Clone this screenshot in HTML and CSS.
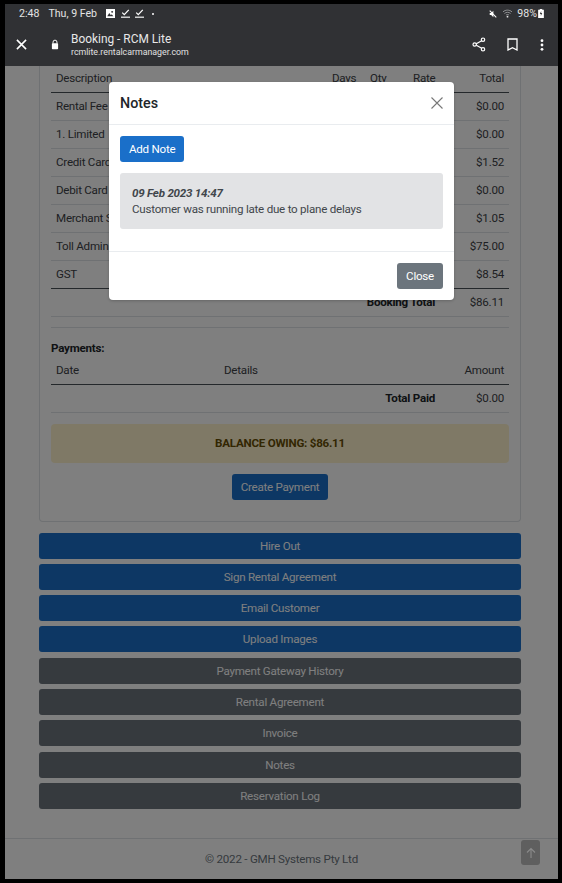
FILE: index.html
```html
<!DOCTYPE html>
<html lang="en">
<head>
  <meta charset="UTF-8">
  <title>Booking - RCM Lite</title>
  <link rel="stylesheet" href="styles.css">
</head>
<body>
  <div class="device">
    <header class="chrome">
      <div class="status-bar">
        <span class="clock">2:48</span>
        <span class="date">Thu, 9 Feb</span>
        <svg class="status-icon" width="9" height="9" viewBox="0 0 11 11"><path d="M0 0h11v11H0z" fill="#fff"/><path d="M1.500 9l2.500-4 2 2.500 1-1 2 2.500z" fill="#303134"/><circle cx="7.500" cy="3.500" r="1.200" fill="#303134"/></svg>
        <svg class="status-icon" width="9" height="9" viewBox="0 0 11 11"><path d="M1.500 4.500l2.500 2.500L9.500 1" fill="none" stroke="#fff" stroke-width="1.500"/><path d="M0 10h11" stroke="#fff" stroke-width="1.400"/></svg>
        <svg class="status-icon" width="9" height="9" viewBox="0 0 11 11"><path d="M1.500 4.500l2.500 2.500L9.500 1" fill="none" stroke="#fff" stroke-width="1.500"/><path d="M0 10h11" stroke="#fff" stroke-width="1.400"/></svg>
        <span class="status-dot"></span>
        <span class="status-right">
          <svg width="8" height="8" viewBox="0 0 11 11"><path d="M1 4h2l3-3v9L3 7H1z" fill="#fff"/><path d="M1 1l9 9" stroke="#fff" stroke-width="1.500"/></svg>
          <svg class="wifi" width="11" height="9" viewBox="0 0 12 10"><path d="M1 3.200c2.800-2.600 7.200-2.600 10 0M2.600 5c2-1.800 4.800-1.800 6.800 0M4.300 6.800c1-.9 2.400-.9 3.400 0" fill="none" stroke="#a5a6a8" stroke-width=".9"/><circle cx="6" cy="8.500" r="1" fill="#e4e4e4"/></svg>
          <span class="battery-text">98%</span>
          <svg class="battery" width="6" height="9" viewBox="0 0 7 11"><path d="M2 0h3v1h2v10H0V1h2z" fill="#fff"/><path d="M3.800 2.500L2 6h1.300v2.500L5 5H3.700z" fill="#303134"/></svg>
        </span>
      </div>
      <div class="toolbar">
        <svg class="tool-close" width="11" height="11" viewBox="0 0 12 12"><path d="M1 1l10 10M11 1L1 11" stroke="#fff" stroke-width="1.700"/></svg>
        <svg class="tool-lock" width="8" height="11" viewBox="0 0 9 12"><path d="M2.300 5V3.300a2.200 2.200 0 0 1 4.400 0V5" fill="none" stroke="#fff" stroke-width="1.100"/><rect x="1" y="4.600" width="7" height="6.800" rx=".8" fill="#fff"/></svg>
        <div class="tool-title">
          <div class="page-title">Booking - RCM Lite</div>
          <div class="page-url">rcmlite.rentalcarmanager.com</div>
        </div>
        <div class="tool-actions">
          <svg width="14" height="15" viewBox="0 0 14 15"><path d="M11 3L3 7.500 11 12" fill="none" stroke="#fff" stroke-width="1.200"/><circle cx="11" cy="2.700" r="1.700" fill="#303134" stroke="#fff" stroke-width="1.200"/><circle cx="2.700" cy="7.500" r="1.700" fill="#303134" stroke="#fff" stroke-width="1.200"/><circle cx="11" cy="12.300" r="1.700" fill="#303134" stroke="#fff" stroke-width="1.200"/></svg>
          <svg width="11" height="13" viewBox="0 0 11 13"><path d="M1 1h9v11L5.500 9.700 1 12z" fill="none" stroke="#fff" stroke-width="1.300"/></svg>
          <svg class="tool-more" width="4" height="12" viewBox="0 0 4 12"><circle cx="2" cy="1.700" r="1.400" fill="#fff"/><circle cx="2" cy="6" r="1.400" fill="#fff"/><circle cx="2" cy="10.300" r="1.400" fill="#fff"/></svg>
        </div>
      </div>
    </header>

    <main class="page">
      <div class="content">
        <section class="card">
          <table class="charges">
            <thead>
              <tr><th class="col-desc">Description</th><th class="col-days">Days</th><th class="col-qty">Qty</th><th class="col-rate">Rate</th><th class="col-total">Total</th></tr>
            </thead>
            <tbody>
              <tr><td>Rental Fee</td><td></td><td></td><td></td><td class="col-total">$0.00</td></tr>
              <tr><td>1. Limited</td><td></td><td></td><td></td><td class="col-total">$0.00</td></tr>
              <tr><td>Credit Card</td><td></td><td></td><td></td><td class="col-total">$1.52</td></tr>
              <tr><td>Debit Card</td><td></td><td></td><td></td><td class="col-total">$0.00</td></tr>
              <tr><td>Merchant S</td><td></td><td></td><td></td><td class="col-total">$1.05</td></tr>
              <tr><td>Toll Admin</td><td></td><td></td><td></td><td class="col-total">$75.00</td></tr>
              <tr class="last-row"><td>GST</td><td></td><td></td><td></td><td class="col-total">$8.54</td></tr>
            </tbody>
          </table>
          <div class="sum-row"><strong>Booking Total</strong><span>$86.11</span></div>
          <div class="spacer-row"></div>

          <h4 class="payments-title">Payments:</h4>
          <div class="pay-head"><span class="pay-date">Date</span><span class="pay-details">Details</span><span class="pay-amount">Amount</span></div>
          <div class="sum-row paid"><strong>Total Paid</strong><span>$0.00</span></div>

          <div class="balance">BALANCE OWING: $86.11</div>
          <div class="pay-action"><button class="btn btn-blue" type="button">Create Payment</button></div>
        </section>

        <div class="actions">
          <button class="btn btn-blue btn-wide" type="button">Hire Out</button>
          <button class="btn btn-blue btn-wide" type="button">Sign Rental Agreement</button>
          <button class="btn btn-blue btn-wide" type="button">Email Customer</button>
          <button class="btn btn-blue btn-wide" type="button">Upload Images</button>
          <button class="btn btn-grey btn-wide" type="button">Payment Gateway History</button>
          <button class="btn btn-grey btn-wide" type="button">Rental Agreement</button>
          <button class="btn btn-grey btn-wide" type="button">Invoice</button>
          <button class="btn btn-grey btn-wide" type="button">Notes</button>
          <button class="btn btn-grey btn-wide" type="button">Reservation Log</button>
        </div>
      </div>

      <footer class="footer">© 2022 - GMH Systems Pty Ltd</footer>

      <div class="backdrop"></div>

      <div class="to-top">
        <svg width="10" height="12" viewBox="0 0 10 12"><path d="M5 11V2M1 5.500L5 1.500l4 4" fill="none" stroke="#8a8a8a" stroke-width="1.100"/></svg>
      </div>

      <div class="modal">
        <div class="modal-header">
          <h5>Notes</h5>
          <svg width="12" height="12" viewBox="0 0 12 12"><path d="M.5.500l11 11M11.500.500l-11 11" stroke="#777" stroke-width="1.100"/></svg>
        </div>
        <div class="modal-body">
          <button class="btn btn-blue" type="button">Add Note</button>
          <div class="note">
            <em>09 Feb 2023 14:47</em>
            <p>Customer was running late due to plane delays</p>
          </div>
        </div>
        <div class="modal-footer">
          <button class="btn btn-grey" type="button">Close</button>
        </div>
      </div>
    </main>
  </div>
</body>
</html>
```

FILE: styles.css
```css
html, body {
  margin: 0;
  height: 100%;
  background: #000;
}

body {
  font-family: Roboto, "Liberation Sans", sans-serif;
  font-size: 11.6px;
  letter-spacing: -0.24px;
  color: #3c4146;
  overflow: hidden;
}

.device {
  box-sizing: border-box;
  height: 883px;
  padding: 4px 4px 4px 5px;
  display: flex;
  flex-direction: column;
}

/* browser chrome */
.chrome {
  background: #303134;
  color: #fff;
  height: 62px;
  flex: none;
  letter-spacing: normal;
}

.status-bar {
  height: 19px;
  display: flex;
  align-items: center;
  gap: 5.5px;
  padding: 0 14px;
  font-size: 10.6px;
  color: #e4e4e4;
}

.clock {
  margin-right: 3.5px;
}

.date {
  margin-right: 3.5px;
}

.status-icon {
  display: block;
}

.status-dot {
  width: 2px;
  height: 2px;
  margin-left: 2px;
  background: #fff;
  border-radius: 50%;
}

.status-right {
  margin-left: auto;
  display: flex;
  align-items: center;
  gap: 1px;
}

.wifi {
  margin: 0 3px 0 4px;
}

.toolbar {
  height: 43px;
  display: flex;
  align-items: center;
  padding: 0 14px 0 11px;
}

.tool-close {
  margin-right: 24px;
}

.tool-lock {
  margin-right: 12px;
}

.tool-title {
  flex: 1;
}

.page-title {
  font-size: 11.9px;
  line-height: 15px;
  color: #e8e8e8;
}

.page-url {
  font-size: 8.8px;
  line-height: 11px;
  color: #e0e0e0;
}

.tool-actions {
  display: flex;
  align-items: center;
  gap: 21px;
}

.tool-more {
  margin-left: 1px;
}

/* page under the modal */
.page {
  position: relative;
  flex: 1;
  background: #fff;
  overflow: hidden;
}

.content {
  padding: 0 37px 0 34px;
}

.card {
  border: 1px solid #dee2e6;
  border-top: 0;
  border-radius: 0 0 4px 4px;
  padding: 0 11px 21px;
}

.charges {
  width: 100%;
  border-collapse: collapse;
  table-layout: fixed;
}

.charges th {
  box-sizing: border-box;
  font-weight: 400;
  height: 26px;
  padding: 0 5px 2px;
  border-bottom: 1px solid #495057;
  text-align: left;
}

.charges td {
  height: 27px;
  padding: 0 5px;
  border-bottom: 1px solid #dee2e6;
  white-space: nowrap;
  overflow: hidden;
}

.charges .last-row td {
  border-bottom: 1px solid #495057;
}

.col-desc {
  width: 276px;
}

.col-days {
  width: 38px;
}

.col-qty {
  width: 43px;
}

.col-rate {
  width: 52px;
}

.charges .col-total {
  text-align: right;
}

.sum-row {
  height: 27px;
  display: flex;
  align-items: center;
  justify-content: flex-end;
  border-bottom: 1px solid #dee2e6;
  padding: 0 5px;
}

.sum-row strong {
  font-weight: 700;
  color: #212529;
}

.sum-row span {
  width: 69px;
  text-align: right;
}

.spacer-row {
  height: 10px;
  border-bottom: 1px solid #dee2e6;
}

.payments-title {
  margin: 13px 0 3px;
  font-size: 11.6px;
  line-height: 14px;
  font-weight: 700;
  color: #212529;
}

.pay-head {
  display: flex;
  height: 24px;
  align-items: center;
  padding: 0 5px 2px;
  border-bottom: 1px solid #495057;
}

.pay-date {
  width: 168px;
}

.pay-amount {
  margin-left: auto;
}

.balance {
  margin-top: 11px;
  height: 39px;
  display: flex;
  align-items: center;
  justify-content: center;
  background: #fff3cd;
  color: #664d03;
  font-weight: 700;
  border-radius: 4px;
}

.pay-action {
  display: flex;
  justify-content: center;
  margin-top: 11px;
}

/* buttons */
.btn {
  display: block;
  height: 26px;
  padding: 0 9px;
  border: 0;
  border-radius: 3px;
  font-family: inherit;
  font-size: 11.6px;
  letter-spacing: inherit;
  color: #fff;
}

.btn-blue {
  background: #1a6fc9;
}

.btn-grey {
  background: #6c757d;
}

.btn-wide {
  width: 100%;
}

.actions {
  margin-top: 11px;
  display: flex;
  flex-direction: column;
  gap: 5.33px;
}

.footer {
  position: absolute;
  left: 0;
  right: 0;
  bottom: 0;
  height: 41px;
  box-sizing: border-box;
  border-top: 1px solid #dee2e6;
  display: flex;
  align-items: center;
  justify-content: center;
  color: #6c757d;
}

/* dimmed layer and modal */
.backdrop {
  position: absolute;
  inset: 0;
  background: rgba(0, 0, 0, 0.5);
}

.to-top {
  position: absolute;
  right: 18px;
  bottom: 14px;
  width: 19px;
  height: 25px;
  border-radius: 3px;
  background: #5f5f5f;
  display: flex;
  align-items: center;
  justify-content: center;
}

.modal {
  position: absolute;
  left: 104px;
  top: 16px;
  width: 345px;
  background: #fff;
  border-radius: 4px;
  box-shadow: 0 1px 3px rgba(0, 0, 0, 0.2);
}

.modal-header {
  height: 42px;
  display: flex;
  align-items: center;
  justify-content: space-between;
  padding: 0 11px;
  border-bottom: 1px solid #e9ecef;
}

.modal-header h5 {
  margin: 0;
  font-size: 14.3px;
  font-weight: 500;
  letter-spacing: normal;
  color: #212529;
}

.modal-body {
  padding: 11px 11px 0;
  height: 115px;
}

.note {
  margin-top: 11px;
  height: 56px;
  box-sizing: border-box;
  padding: 12px 12px 0;
  background: #e2e3e5;
  border-radius: 3px;
  color: #41464b;
}

.note em {
  display: block;
  font-weight: 700;
  line-height: 16px;
}

.note p {
  margin: 0;
  line-height: 17px;
}

.modal-footer {
  height: 47.5px;
  display: flex;
  align-items: center;
  justify-content: flex-end;
  padding: 0 11px;
  border-top: 1px solid #e9ecef;
}
```
